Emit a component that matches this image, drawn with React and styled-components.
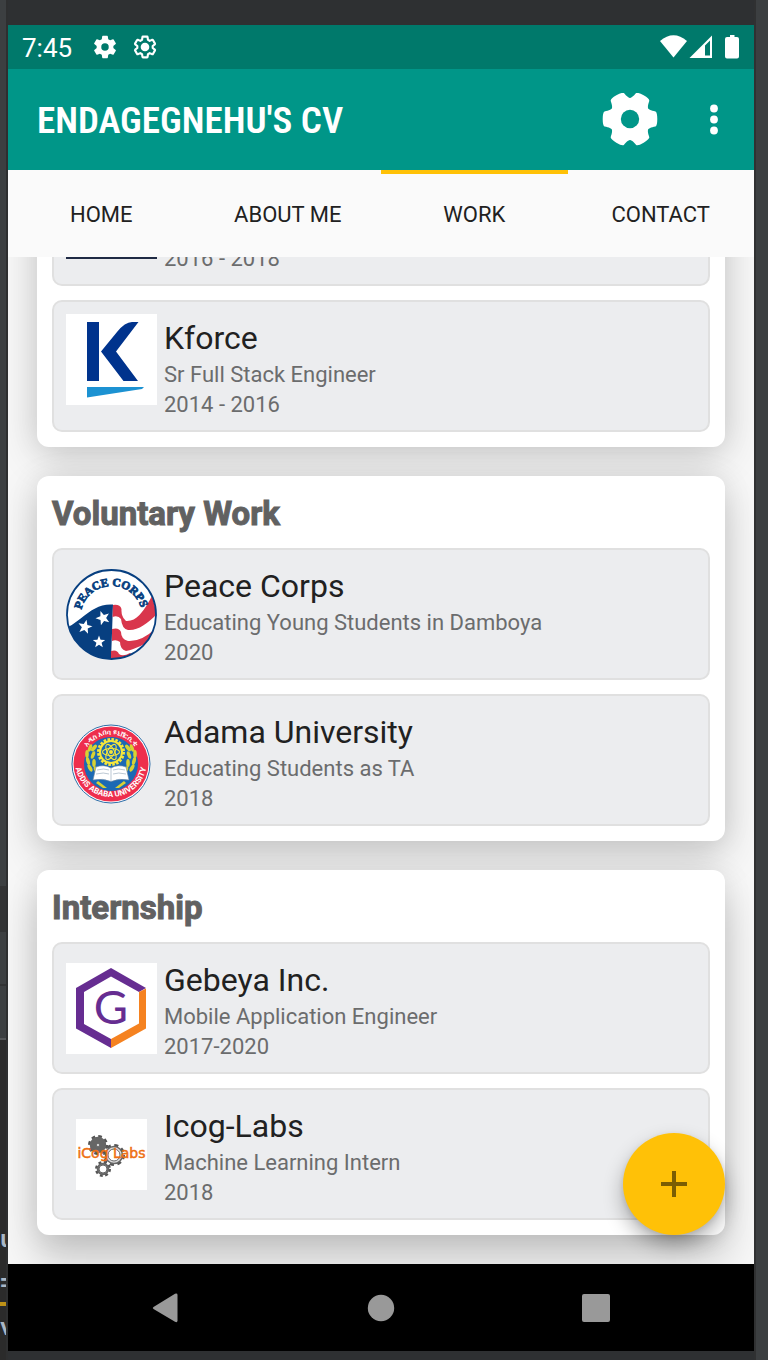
import React from "react";
import styled, { createGlobalStyle } from "styled-components";

const GlobalStyle = createGlobalStyle`
  *, *::before, *::after { box-sizing: border-box; }
  body { margin: 0; background: #2e3032; font-family: Roboto, "Noto Sans", sans-serif; }
  h1, h2, h3, p, ul { margin: 0; padding: 0; }
  ul { list-style: none; }
`;

const Desktop = styled.div`
  display: grid;
  grid-template-columns: 8px minmax(0, 1fr) 14px;
  height: 100vh;
`;

const EditorEdge = styled.div`
  display: flex;
  flex-direction: column;
  overflow: hidden;
  background: #3c3f41;
  border-right: 2px solid #2e2f30;
`;

const EdgeSpace = styled.div`
  flex: 1;
`;

const EdgePanel = styled.div`
  flex: none;
  height: ${(p) => p.$height}px;
  background: ${(p) => p.$color};
`;

const EdgeCode = styled.div`
  flex: none;
  display: flex;
  flex-direction: column;
  justify-content: flex-end;
  height: 322px;
  padding-bottom: 10px;
  border-top: 2px solid #555759;
  background: #2b2b2b;
  color: #a9b7c6;
  font: 700 24px/46px "Liberation Mono", monospace;
`;

const EdgeLine = styled.span`
  height: 44px;
  border-bottom: ${(p) => (p.$marked ? "4px solid #be9117" : "0")};
`;

const RightEdge = styled.div`
  background: #3c3f41;
  border-left: 2px solid #303132;
`;

const Phone = styled.div`
  display: flex;
  flex-direction: column;
  min-height: 0;
  padding: 25px 0 9px;
`;

const StatusBar = styled.div`
  flex: none;
  display: flex;
  align-items: center;
  justify-content: space-between;
  height: 44px;
  padding: 0 14px;
  background: #00796b;
  color: #fff;
`;

const StatusGroup = styled.div`
  display: flex;
  align-items: center;
  gap: ${(p) => p.$gap}px;
`;

const Clock = styled.time`
  padding-top: 2px;
  font-size: 26px;
  line-height: 30px;
`;

const AppBar = styled.header`
  flex: none;
  display: flex;
  align-items: center;
  justify-content: space-between;
  height: 101px;
  padding: 0 33px 0 29px;
  background: #009688;
  color: #fff;
`;

const AppTitle = styled.h1`
  padding-top: 2px;
  font: 600 37px/44px "Roboto Condensed", "Liberation Sans Narrow", Roboto, sans-serif;
  white-space: nowrap;
`;

const Actions = styled.div`
  display: flex;
  align-items: center;
  gap: 49px;
`;

const IconButton = styled.button`
  display: grid;
  place-items: center;
  padding: 0;
  border: 0;
  background: none;
  color: inherit;
  cursor: pointer;
`;

const Tabs = styled.nav`
  flex: none;
  display: grid;
  grid-template-columns: repeat(4, 1fr);
  height: 87px;
  background: #fafafa;
`;

const Tab = styled.a`
  display: grid;
  place-items: center;
  padding-bottom: 2px;
  border-top: 4px solid ${(p) => (p.$active ? "#ffc107" : "transparent")};
  color: #212121;
  font-size: 22px;
  line-height: 28px;
  text-decoration: none;
`;

const Stage = styled.main`
  position: relative;
  flex: 1;
  min-height: 0;
  display: flex;
`;

const Scroller = styled.div`
  flex: 1;
  display: flex;
  flex-direction: column-reverse;
  overflow: hidden auto;
  scrollbar-width: none;
  background: #f7f7f7;
`;

const Sections = styled.div`
  flex: none;
  display: flex;
  flex-direction: column;
  gap: 29px;
  padding: 29px;
`;

const Card = styled.section`
  padding: 18px 15px 15px;
  border-radius: 12px;
  background: #fff;
  box-shadow: 0 0 30px rgba(0, 0, 0, 0.08),
    0 ${(p) => p.$depth}px 40px rgba(0, 0, 0, ${(p) => p.$shade});
`;

const CardTitle = styled.h2`
  margin-bottom: 15px;
  color: #616161;
  font-size: 33px;
  font-weight: 700;
  line-height: 39px;
  -webkit-text-stroke: 1px #616161;
`;

const Jobs = styled.ul`
  display: flex;
  flex-direction: column;
  gap: 14px;
`;

const Job = styled.li`
  display: flex;
  align-items: ${(p) => (p.$top ? "flex-start" : "center")};
  gap: 7px;
  padding: 12px 12px 10px;
  border: 2px solid #e0e0e0;
  border-radius: 10px;
  background: #ecedef;
`;

const JobText = styled.div`
  display: flex;
  flex-direction: column;
  justify-content: flex-end;
  min-height: 106px;
`;

const Employer = styled.h3`
  margin-bottom: 2px;
  color: #212121;
  font-size: 32px;
  font-weight: 400;
  line-height: 39px;
`;

const Detail = styled.p`
  color: #6b6c6d;
  font-size: 22px;
  line-height: 30px;
`;

const Logo = styled.svg`
  flex: none;
  display: block;
  width: 91px;
  height: 91px;
  margin-bottom: 2px;
`;

const AddButton = styled.button`
  position: absolute;
  right: 29px;
  bottom: 29px;
  display: grid;
  place-items: center;
  width: 102px;
  height: 102px;
  padding: 0;
  border: 0;
  border-radius: 50%;
  background: #ffc107;
  box-shadow: 0 10px 20px rgba(0, 0, 0, 0.3), 0 2px 6px rgba(0, 0, 0, 0.1);
  cursor: pointer;
`;

const NavBar = styled.footer`
  flex: none;
  display: flex;
  align-items: center;
  justify-content: center;
  gap: 187px;
  height: 87px;
  background: #000;
  color: #999;
`;

const GEAR =
  "M19.14 12.94c.04-.3.06-.61.06-.94s-.02-.64-.07-.94l2.03-1.58a.49.49 0 0 0 .12-.61l-1.92-3.32a.49.49 0 0 0-.59-.22l-2.39.96a7 7 0 0 0-1.62-.94l-.36-2.54a.48.48 0 0 0-.48-.41h-3.84a.47.47 0 0 0-.47.41l-.36 2.54a7.4 7.4 0 0 0-1.62.94l-2.39-.96a.48.48 0 0 0-.59.22L2.74 8.87a.47.47 0 0 0 .12.61l2.03 1.58a6 6 0 0 0 0 1.88l-2.03 1.58a.49.49 0 0 0-.12.61l1.92 3.32c.12.22.37.29.59.22l2.39-.96c.5.38 1.03.7 1.62.94l.36 2.54c.05.24.24.41.48.41h3.84c.24 0 .44-.17.47-.41l.36-2.54a7 7 0 0 0 1.62-.94l2.39.96c.22.08.47 0 .59-.22l1.92-3.32a.47.47 0 0 0-.12-.61z";

const GearSolid = () => (
  <svg width="28" height="28" viewBox="0 0 24 24" fill="currentColor" fillRule="evenodd" aria-hidden="true">
    <path d={GEAR + "M12 15.2a3.2 3.2 0 1 1 0-6.4 3.2 3.2 0 0 1 0 6.4z"} />
  </svg>
);

const GearOutline = () => (
  <svg width="28" height="28" viewBox="0 0 24 24" fill="currentColor" aria-hidden="true">
    <g transform="translate(12 12) scale(0.92) translate(-12 -12)">
      <path d={GEAR} fill="none" stroke="currentColor" strokeWidth="2" strokeLinejoin="round" />
    </g>
    <circle cx="12" cy="12" r="3.7" />
  </svg>
);

const BigGear = () => (
  <svg width="56" height="54" viewBox="-28 -26 56 54" aria-hidden="true">
    <g fill="currentColor">
      <circle r="20.5" />
      {[0, 60, 120, 180, 240, 300].map((a) => (
        <path
          key={a}
          transform={`rotate(${a})`}
          d="M16 -13.5C18 -9 21 -8.6 25.5 -7.6Q27.3 -6.600 27.3 0Q27.3 6.600 25.5 7.6C21 8.6 18 9 16 13.5Z"
        />
      ))}
    </g>
    <circle r="9.2" fill="#009688" />
  </svg>
);

const Dots = () => (
  <svg width="14" height="32" viewBox="0 0 14 32" fill="currentColor" aria-hidden="true">
    <circle cx="7" cy="4.500" r="3.9" />
    <circle cx="7" cy="15.500" r="3.9" />
    <circle cx="7" cy="26.500" r="3.9" />
  </svg>
);

const Signals = () => (
  <svg width="80" height="26" viewBox="0 0 80 26" fill="currentColor" aria-hidden="true">
    <path d="M0 7Q13.500 -4.500 27 7L13.500 23.500Z" />
    <path fillRule="evenodd" d="M29.500 24L52 1.500V24ZM45 11.500V21.500H50V6.500Z" />
    <path d="M70 1H74.500V3H77Q79 3 79 5V22.500Q79 24.500 77 24.500H67Q65 24.500 65 22.500V5Q65 3 67 3H70Z" />
  </svg>
);

const DarkLogo = () => (
  <Logo viewBox="0 0 91 91" role="img" aria-label="Employer logo">
    <rect width="91" height="91" fill="#1f2a44" />
  </Logo>
);

const KforceLogo = () => (
  <Logo viewBox="0 0 91 91" role="img" aria-label="Kforce logo">
    <rect width="91" height="91" fill="#fff" />
    <path fill="#00338d" d="M21 8H33V67H21ZM35 37.500L51 18Q59 8 66 8H72.500L50 37.500L72 67H57.500Z" />
    <path fill="#1c92d2" d="M21 73H78L76 75L21 83.500Z" />
  </Logo>
);

const star = (x, y, r, turn) => {
  const pts = [];
  for (let i = 0; i < 10; i++) {
    const a = ((turn + i * 36 - 90) * Math.PI) / 180;
    const d = i % 2 ? r * 0.42 : r;
    pts.push(`${x + d * Math.cos(a)},${y + d * Math.sin(a)}`);
  }
  return pts.join(" ");
};

const PeaceCorpsLogo = () => (
  <Logo viewBox="0 0 91 91" role="img" aria-label="Peace Corps logo">
    <defs>
      <clipPath id="peace-disc"><circle cx="45.500" cy="45.500" r="44.500" /></clipPath>
      <path id="peace-arc" d="M14.500 48A31 31 0 1 1 76.500 48" />
    </defs>
    <circle cx="45.500" cy="45.500" r="44.500" fill="#fff" />
    <g clipPath="url(#peace-disc)">
      <path fill="#073f80" d="M0 59C16 52 26 34 47 35.500L46 64L45 91H0Z" />
      <g fill="#d9364c">
        <path d="M47 36Q54 35 55.500 40Q55 48 60 52C72 53 80 38 86 27L91 45C82 54 72 62 62 61Q56 60 55 50Q52 46 46.500 48Z" />
        <path d="M46 60Q53 58 55 63Q55 70 62 72Q76 73 91 58V69C80 74 70 80 60 82Q54 80 54 73Q50 70 46 72Z" />
        <path d="M45 82Q51 80 53 85Q57 88 64 84L70 88L55 91H45Z" />
      </g>
      <g fill="#fff">
        <polygon points={star(19, 58, 7.5, 12)} />
        <polygon points={star(37, 49, 7.500, -20)} />
        <polygon points={star(33, 73, 6.5, 0)} />
      </g>
    </g>
    <circle cx="45.500" cy="45.500" r="44.500" fill="none" stroke="#073f80" strokeWidth="1.800" />
    <text fill="#073f80" fontFamily="Liberation Serif, serif" fontWeight="700" fontSize="11.500" stroke="#073f80" strokeWidth="0.800" textAnchor="middle">
      <textPath href="#peace-arc" startOffset="49%">PEACE CORPS</textPath>
    </text>
  </Logo>
);

const Laurel = ({ flip }) => (
  <g transform={flip ? "translate(90 0) scale(-1 1)" : undefined} fill="#d8d233">
    {[[24, 33, 20], [21, 39, 0], [22, 46, -15], [24, 53, -30], [28, 33, 40], [27, 40, 20], [28, 48, 0], [30, 55, -20]].map(([x, y, r]) => (
      <ellipse key={`${x}-${y}`} cx={x} cy={y} rx="1.800" ry="4" transform={`rotate(${r} ${x} ${y})`} />
    ))}
    <path d="M32 66L41 73H37L30 68Z" />
  </g>
);

const UniversityLogo = () => (
  <Logo viewBox="0 0 91 91" role="img" aria-label="Addis Ababa University logo">
    <defs>
      <path id="uni-top" d="M15.500 49A29.500 29.500 0 0 1 74.500 49" />
      <path id="uni-bottom" d="M9 46A36 36 0 1 0 81 46" />
    </defs>
    <circle cx="45" cy="49" r="39" fill="#fff" stroke="#2d6da8" strokeWidth="1" />
    <circle cx="45" cy="49" r="37.500" fill="#ee2e4d" />
    <circle cx="45" cy="49" r="27" fill="#1b69b4" />
    <Laurel />
    <Laurel flip />
    <circle cx="45" cy="37" r="12.500" fill="none" stroke="#f5e63a" strokeWidth="3" strokeDasharray="2.500 1.430" />
    <circle cx="45" cy="37" r="11" fill="none" stroke="#f5e63a" strokeWidth="2" />
    <g fill="none" stroke="#f5e63a" strokeWidth="1.100">
      {[0, 60, 120].map((a) => (
        <ellipse key={a} cx="45" cy="37" rx="8.500" ry="3.500" transform={`rotate(${a} 45 37)`} />
      ))}
    </g>
    <circle cx="45" cy="37" r="2" fill="#f5e63a" />
    <path fill="#fff" stroke="#6e87a0" strokeWidth="0.600" d="M30 52Q38 49 45 53Q52 49 60 52L63 65Q53 63 45 66.500Q37 63 27 65Z" />
    <path fill="none" stroke="#9fb0c0" strokeWidth="0.700" d="M45 53V66M31 55Q38 53 43 55M30 59Q38 57 43 59M47 55Q52 53 59 55M47 59Q52 57 60 59" />
    <g fill="#fff" fontFamily="Roboto, Noto Sans, sans-serif" fontWeight="700" textAnchor="middle">
      <text fontSize="7"><textPath href="#uni-top" startOffset="50%">አዲስ አበባ ዩኒቨርሲቲ</textPath></text>
      <text fontSize="8"><textPath href="#uni-bottom" startOffset="50%">ADDIS ABABA UNIVERSITY</textPath></text>
    </g>
  </Logo>
);

const GebeyaLogo = () => (
  <Logo viewBox="0 0 91 91" role="img" aria-label="Gebeya logo">
    <rect width="91" height="91" fill="#fff" />
    <path fill="#662d91" d="M45 5L80 25L73 29L45 13.500L18 29V61L45 76V85L10 65.500V25Z" />
    <path fill="#f58220" d="M80 25.500V65.500L45 85V76L73 60.500V29Z" />
    <text x="45" y="61" fill="#662d91" fontFamily="Lato, sans-serif" fontSize="47" textAnchor="middle">G</text>
  </Logo>
);

const Cog = ({ x, y, r, fill, hub }) => (
  <g>
    <circle cx={x} cy={y} r={r} fill="none" stroke="#555" strokeWidth="3" strokeDasharray={`${r * 0.42} ${r * 0.365}`} />
    <circle cx={x} cy={y} r={r - 1} fill={fill} stroke="#666" strokeWidth="1.500" />
    <circle cx={x} cy={y} r={hub} fill="#fff" stroke="#666" strokeWidth="1" />
  </g>
);

const IcogLogo = () => (
  <Logo viewBox="0 0 91 91" role="img" aria-label="iCog Labs logo">
    <rect x="10" y="10" width="71" height="71" fill="#fff" />
    <Cog x={32} y={36} r={8.5} fill="#666" hub={1.5} />
    <Cog x={48} y={46} r={9.5} fill="#ddd" hub={6} />
    <Cog x={37} y={60} r={6.5} fill="#777" hub={4} />
    <text x="45.500" y="49" fill="#ee7013" stroke="#ee7013" strokeWidth="0.500" fontFamily="DejaVu Sans, sans-serif" fontSize="14" textAnchor="middle">iCog Labs</text>
  </Logo>
);

const SECTIONS = [
  {
    id: "work",
    depth: 10,
    shade: 0.16,
    jobs: [
      { id: "previous", years: "2016 - 2018", Mark: DarkLogo, top: true },
      { id: "kforce", name: "Kforce", role: "Sr Full Stack Engineer", years: "2014 - 2016", Mark: KforceLogo, top: true },
    ],
  },
  {
    id: "voluntary",
    title: "Voluntary Work",
    depth: 15,
    shade: 0.18,
    jobs: [
      { id: "peace", name: "Peace Corps", role: "Educating Young Students in Damboya", years: "2020", Mark: PeaceCorpsLogo },
      { id: "adama", name: "Adama University", role: "Educating Students as TA", years: "2018", Mark: UniversityLogo },
    ],
  },
  {
    id: "internship",
    title: "Internship",
    depth: 24,
    shade: 0.2,
    jobs: [
      { id: "gebeya", name: "Gebeya Inc.", role: "Mobile Application Engineer", years: "2017-2020", Mark: GebeyaLogo },
      { id: "icog", name: "Icog-Labs", role: "Machine Learning Intern", years: "2018", Mark: IcogLogo },
    ],
  },
];

const TABS = ["HOME", "ABOUT ME", "WORK", "CONTACT"];

export default function App() {
  return (
    <>
      <GlobalStyle />
      <Desktop>
        <EditorEdge aria-hidden="true">
          <EdgeSpace />
          <EdgePanel $height={46} $color="#323334" />
          <EdgePanel $height={52} $color="#3c3f41" />
          <EdgePanel $height={2} $color="#323334" />
          <EdgePanel $height={52} $color="#3c3f41" />
          <EdgeCode>
            <EdgeLine>u</EdgeLine>
            <EdgeLine $marked>=</EdgeLine>
            <EdgeLine>v</EdgeLine>
          </EdgeCode>
        </EditorEdge>
        <Phone>
          <StatusBar>
            <StatusGroup $gap={19}>
              <Clock>7:45</Clock>
              <StatusGroup $gap={12}>
                <GearSolid />
                <GearOutline />
              </StatusGroup>
            </StatusGroup>
            <Signals />
          </StatusBar>
          <AppBar>
            <AppTitle>ENDAGEGNEHU'S CV</AppTitle>
            <Actions>
              <IconButton type="button" aria-label="Settings"><BigGear /></IconButton>
              <IconButton type="button" aria-label="More options"><Dots /></IconButton>
            </Actions>
          </AppBar>
          <Tabs>
            {TABS.map((t) => (
              <Tab key={t} href="#" $active={t === "WORK"} aria-current={t === "WORK" ? "page" : undefined}>{t}</Tab>
            ))}
          </Tabs>
          <Stage>
            <Scroller>
              <Sections>
                {SECTIONS.map((s) => (
                  <Card key={s.id} $depth={s.depth} $shade={s.shade}>
                    {s.title && <CardTitle>{s.title}</CardTitle>}
                    <Jobs>
                      {s.jobs.map(({ id, name, role, years, Mark, top }) => (
                        <Job key={id} $top={top}>
                          <Mark />
                          <JobText>
                            {name && <Employer>{name}</Employer>}
                            {role && <Detail>{role}</Detail>}
                            <Detail>{years}</Detail>
                          </JobText>
                        </Job>
                      ))}
                    </Jobs>
                  </Card>
                ))}
              </Sections>
            </Scroller>
            <AddButton type="button" aria-label="Add entry">
              <svg width="26" height="26" viewBox="0 0 26 26" aria-hidden="true">
                <path d="M13 0V26M0 13H26" stroke="#7a5d03" strokeWidth="4" />
              </svg>
            </AddButton>
          </Stage>
          <NavBar>
            <IconButton type="button" aria-label="Back">
              <svg width="28" height="30" viewBox="1 0 28 30" fill="currentColor" aria-hidden="true">
                <path d="M2.500 14L24 .7Q26.500 0 26.500 2V27.500Q26.500 30 24 28.800L2.500 16Q1 15 2.500 14Z" />
              </svg>
            </IconButton>
            <IconButton type="button" aria-label="Home">
              <svg width="28" height="28" viewBox="0 0 28 28" fill="currentColor" aria-hidden="true">
                <circle cx="14" cy="14" r="13.200" />
              </svg>
            </IconButton>
            <IconButton type="button" aria-label="Recent apps">
              <svg width="28" height="28" viewBox="0 0 28 28" fill="currentColor" aria-hidden="true">
                <rect width="28" height="28" rx="2" />
              </svg>
            </IconButton>
          </NavBar>
        </Phone>
        <RightEdge />
      </Desktop>
    </>
  );
}
